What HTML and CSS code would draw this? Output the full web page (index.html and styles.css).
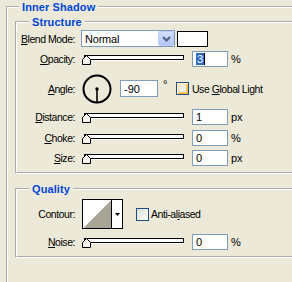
FILE: index.html
```html
<!DOCTYPE html>
<html lang="en">
<head>
  <meta charset="UTF-8">
  <title>Inner Shadow</title>
  <link rel="stylesheet" href="styles.css">
</head>

<body>
  <fieldset class="group outer">
    <legend>Inner Shadow</legend>

    <fieldset class="group structure">
      <legend>Structure</legend>

      <div class="row row-blend">
        <label class="lbl"><u>B</u>lend Mode:</label>
        <div class="combo">
          <span class="combo-text">Normal</span>
          <span class="combo-btn">
            <svg width="9" height="6" viewBox="0 0 9 6"><path d="M1 1 L4.5 4.5 L8 1" fill="none" stroke="#4d6185" stroke-width="2"/></svg>
          </span>
        </div>
        <span class="swatch"></span>
      </div>

      <div class="row row-opacity">
        <label class="lbl"><u>O</u>pacity:</label>
        <div class="slider">
          <div class="track"></div>
          <svg class="thumb" width="10" height="11" viewBox="0 0 10 11"><path d="M4.5 0.5 L8.5 4.5 L8.5 9.5 L0.5 9.5 L0.5 4.5 Z" fill="#f4f3ee" stroke="#000"/></svg>
        </div>
        <div class="field"><span class="sel">3</span><span class="caret"></span></div>
        <span class="unit">%</span>
      </div>

      <div class="row row-angle">
        <label class="lbl"><u>A</u>ngle:</label>
        <svg class="dial" width="30" height="30" viewBox="0 0 30 30">
          <circle cx="15" cy="15" r="13.5" fill="none" stroke="#000" stroke-width="2"/>
          <line x1="15" y1="15" x2="15" y2="28" stroke="#000" stroke-width="1.6"/>
          <circle cx="15" cy="15" r="1.7" fill="#000"/>
        </svg>
        <div class="field field-angle">-90</div>
        <span class="deg">°</span>
        <span class="check check-hot"></span>
        <span class="check-text">Use <u>G</u>lobal Light</span>
      </div>

      <div class="row row-distance">
        <label class="lbl"><u>D</u>istance:</label>
        <div class="slider">
          <div class="track"></div>
          <svg class="thumb" width="10" height="11" viewBox="0 0 10 11"><path d="M4.5 0.5 L8.5 4.5 L8.5 9.5 L0.5 9.5 L0.5 4.5 Z" fill="#f4f3ee" stroke="#000"/></svg>
        </div>
        <div class="field">1</div>
        <span class="unit">px</span>
      </div>

      <div class="row row-choke">
        <label class="lbl"><u>C</u>hoke:</label>
        <div class="slider">
          <div class="track"></div>
          <svg class="thumb" width="10" height="11" viewBox="0 0 10 11"><path d="M4.5 0.5 L8.5 4.5 L8.5 9.5 L0.5 9.5 L0.5 4.5 Z" fill="#f4f3ee" stroke="#000"/></svg>
        </div>
        <div class="field">0</div>
        <span class="unit">%</span>
      </div>

      <div class="row row-size">
        <label class="lbl"><u>S</u>ize:</label>
        <div class="slider">
          <div class="track"></div>
          <svg class="thumb" width="10" height="11" viewBox="0 0 10 11"><path d="M4.5 0.5 L8.5 4.5 L8.5 9.5 L0.5 9.5 L0.5 4.5 Z" fill="#f4f3ee" stroke="#000"/></svg>
        </div>
        <div class="field">0</div>
        <span class="unit">px</span>
      </div>
    </fieldset>

    <fieldset class="group quality">
      <legend>Quality</legend>

      <div class="row row-contour">
        <label class="lbl">Contour:</label>
        <div class="contour">
          <span class="contour-prev"></span>
          <span class="contour-btn">
            <svg width="5" height="3" viewBox="0 0 5 3"><path d="M0 0 H5 L2.5 3 Z" fill="#000"/></svg>
          </span>
        </div>
        <span class="check check-aa"></span>
        <span class="check-text">Anti-al<u>i</u>ased</span>
      </div>

      <div class="row row-noise">
        <label class="lbl"><u>N</u>oise:</label>
        <div class="slider">
          <div class="track"></div>
          <svg class="thumb" width="10" height="11" viewBox="0 0 10 11"><path d="M4.5 0.5 L8.5 4.5 L8.5 9.5 L0.5 9.5 L0.5 4.5 Z" fill="#f4f3ee" stroke="#000"/></svg>
        </div>
        <div class="field">0</div>
        <span class="unit">%</span>
      </div>
    </fieldset>
  </fieldset>
</body>
</html>
```

FILE: styles.css
```css
html, body {
  margin: 0;
  height: 100%;
  overflow: hidden;
}

body {
  background: #ece9d8;
  font-family: "Liberation Sans", Arial, sans-serif;
  font-size: 10.5px;
  letter-spacing: -0.45px;
  color: #000;
}

u { text-decoration: underline; text-underline-offset: 1px; }

.group {
  margin: 0;
  padding: 0;
  border: 2px groove #fff;
  min-width: 0;
}

.group > legend {
  padding: 0 3px;
  margin-left: 12px;
  font-size: 11px;
  font-weight: bold;
  line-height: 14px;
  letter-spacing: 0.1px;
  color: #0046d5;
}

.outer {
  margin-left: 6px;
  padding: 0 0 30px 7px;
  width: 340px;
}

.outer > legend { margin-left: 4px; }

.structure {
  margin-top: 1px;
  padding: 1px 0 6px;
  width: 330px;
}

.quality {
  margin-top: 8px;
  padding: 3px 0 6px;
  width: 330px;
}

.row {
  display: flex;
  align-items: center;
  height: 16px;
}

.row-blend { height: 17px; }
.row-opacity { margin-top: 4px; }
.row-angle { margin-top: 6px; height: 31px; }
.row-distance { margin-top: 5px; }
.row-choke { margin-top: 5px; }
.row-size { margin-top: 4px; }
.row-contour { height: 30px; }
.row-noise { margin-top: 5px; }

.lbl {
  flex: none;
  width: 58px;
  text-align: right;
}

/* blend mode combo */
.combo {
  box-sizing: border-box;
  display: flex;
  align-items: center;
  width: 94px;
  height: 17px;
  margin-left: 6px;
  border: 1px solid #7f9db9;
  background: #fff;
}

.combo-text {
  flex: 1;
  padding-left: 3px;
  font-size: 11px;
  letter-spacing: -0.2px;
}

.combo-btn {
  box-sizing: border-box;
  display: flex;
  align-items: center;
  justify-content: center;
  width: 16px;
  height: 15px;
  border: 1px solid #bccdf4;
  border-radius: 2px;
  background: linear-gradient(#d3defc, #b3c6f4);
}

.swatch {
  box-sizing: border-box;
  width: 31px;
  height: 16px;
  margin-left: 2px;
  border: 1px solid #000;
  background: #fff;
}

/* sliders */
.slider {
  position: relative;
  flex: none;
  width: 100px;
  height: 16px;
  margin-left: 9px;
}

.track {
  box-sizing: border-box;
  height: 5px;
  margin-top: 4px;
  border: 1px solid #000;
  background: #fff;
  box-shadow: 0 1px #fff;
}

.thumb {
  position: absolute;
  left: -2px;
  top: 4px;
}

.field {
  box-sizing: border-box;
  display: flex;
  align-items: center;
  width: 36px;
  height: 16px;
  margin-left: 8px;
  padding-left: 3px;
  border: 1px solid #7f9db9;
  background: #fff;
  font-size: 11px;
  letter-spacing: 0;
}

.sel {
  background: #316ac5;
  color: #fff;
  line-height: 12px;
  padding: 0 1px;
}

.caret {
  width: 1px;
  height: 12px;
  background: #000;
}

.unit {
  margin-left: 3px;
  font-size: 11px;
  letter-spacing: 0;
}

/* angle */
.dial {
  flex: none;
  margin-left: 7px;
}

.field-angle {
  width: 38px;
  height: 17px;
  margin-left: 8px;
}

.deg {
  align-self: flex-start;
  margin: 5px 0 0 5px;
  font-size: 11px;
}

.check {
  box-sizing: border-box;
  flex: none;
  width: 13px;
  height: 13px;
  border: 1px solid #1c5180;
  background: linear-gradient(135deg, #dcdcd7, #fff);
}

.check-hot {
  margin-left: 9px;
  background: linear-gradient(135deg, #e4e3dc, #f4f4ee);
  box-shadow: inset 1px 1px #fff0cf, inset -1px -1px #f8b33f, inset 2px 2px #fde2a5, inset -2px -2px #fbc86a;
}

.check-text {
  margin-left: 3px;
}

/* contour */
.contour {
  box-sizing: border-box;
  display: flex;
  width: 41px;
  height: 30px;
  margin-left: 7px;
  border: 1px solid #000;
  background: #fff;
}

.contour-prev {
  flex: 1;
  background: linear-gradient(to top left, #a8a596 50%, #fff 50%);
}

.contour-btn {
  display: flex;
  align-items: center;
  justify-content: center;
  width: 10px;
  border-left: 1px solid #000;
}

.check-aa { margin-left: 13px; }
.check-aa + .check-text { margin-left: 2px; }
```
